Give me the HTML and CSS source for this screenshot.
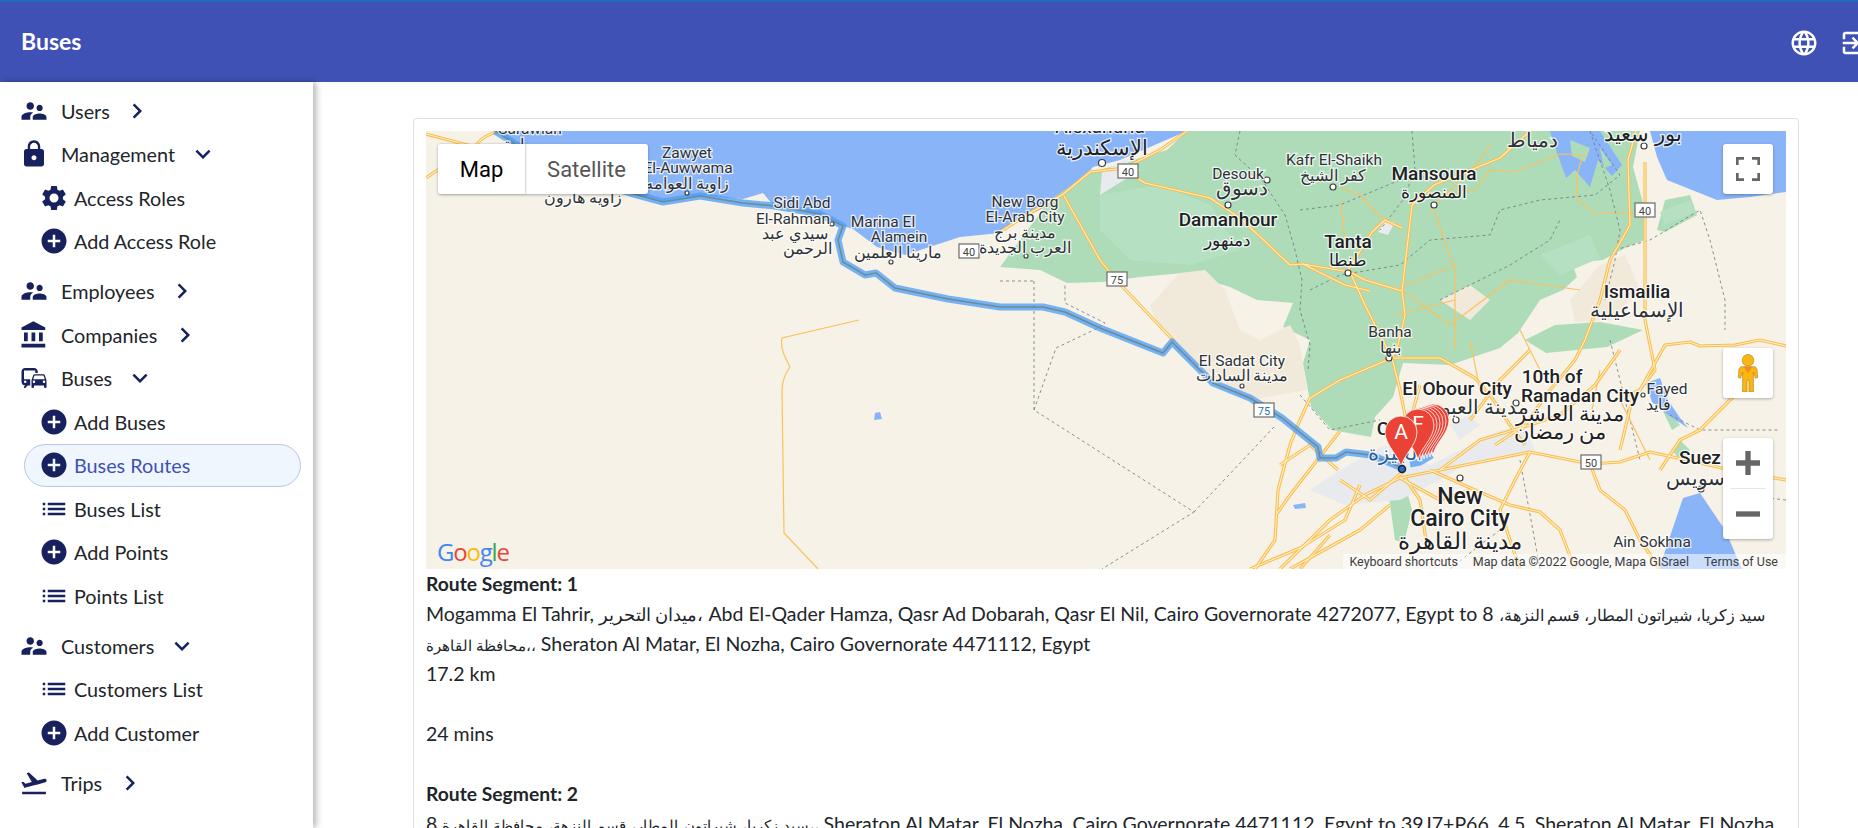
FILE: index.html
```html
<!DOCTYPE html>
<html lang="en">
<head>
  <meta charset="UTF-8">
  <title>Buses</title>
  <link rel="stylesheet" href="styles.css">
</head>
<body>
  <header class="topbar">
    <span class="topbar-title">Buses</span>
    <div class="topbar-actions">
      <svg class="icon" viewBox="0 0 24 24"><path d="M11.99 2C6.47 2 2 6.48 2 12s4.47 10 9.99 10C17.52 22 22 17.52 22 12S17.52 2 11.99 2zm6.93 6h-2.95c-.32-1.25-.78-2.45-1.38-3.56 1.84.63 3.37 1.91 4.33 3.56zM12 4.04c.83 1.2 1.48 2.53 1.91 3.96h-3.82c.43-1.43 1.08-2.76 1.91-3.96zM4.26 14C4.1 13.36 4 12.69 4 12s.1-1.36.26-2h3.38c-.08.66-.14 1.32-.14 2 0 .68.06 1.34.14 2H4.26zm.82 2h2.95c.32 1.25.78 2.45 1.38 3.56-1.84-.63-3.37-1.9-4.33-3.56zm2.95-8H5.08c.96-1.66 2.49-2.93 4.33-3.56C8.81 5.55 8.35 6.75 8.03 8zM12 19.96c-.83-1.2-1.48-2.53-1.91-3.96h3.82c-.43 1.43-1.08 2.76-1.91 3.96zM14.34 14H9.66c-.09-.66-.16-1.32-.16-2 0-.68.07-1.35.16-2h4.68c.09.65.16 1.32.16 2 0 .68-.07 1.34-.16 2zm.25 5.56c.6-1.11 1.06-2.31 1.38-3.56h2.95c-.96 1.65-2.49 2.93-4.33 3.56zM16.36 14c.08-.66.14-1.32.14-2 0-.68-.06-1.34-.14-2h3.38c.16.64.26 1.31.26 2s-.1 1.36-.26 2h-3.38z"/></svg>
      <svg class="icon" viewBox="0 0 24 24"><path d="M10.09 15.59L11.5 17l5-5-5-5-1.41 1.41L12.67 11H3v2h9.67l-2.58 2.59zM19 3H5c-1.11 0-2 .9-2 2v4h2V5h14v14H5v-4H3v4c0 1.1.89 2 2 2h14c1.1 0 2-.9 2-2V5c0-1.1-.9-2-2-2z"/></svg>
    </div>
  </header>

  <svg class="icon-defs" aria-hidden="true">
    <defs>
      <path id="i-people" d="M16.5 12c1.38 0 2.49-1.12 2.49-2.5S17.88 7 16.5 7C15.12 7 14 8.12 14 9.5s1.12 2.5 2.5 2.5zM9 11c1.66 0 2.99-1.34 2.99-3S10.66 5 9 5C7.34 5 6 6.34 6 8s1.34 3 3 3zm7.5 3c-1.83 0-5.5.92-5.5 2.75V19h11v-2.25c0-1.83-3.67-2.75-5.5-2.75zM9 13c-2.33 0-7 1.17-7 3.5V19h7v-2.25c0-.85.33-2.34 2.37-3.47C10.5 13.1 9.66 13 9 13z"/>
      <path id="i-lock" d="M18 8h-1V6c0-2.76-2.24-5-5-5S7 3.24 7 6v2H6c-1.1 0-2 .9-2 2v10c0 1.1.9 2 2 2h12c1.1 0 2-.9 2-2V10c0-1.1-.9-2-2-2zm-6 9c-1.1 0-2-.9-2-2s.9-2 2-2 2 .9 2 2-.9 2-2 2zm3.1-9H8.9V6c0-1.71 1.39-3.1 3.1-3.1 1.71 0 3.1 1.39 3.1 3.1v2z"/>
      <path id="i-gear" d="M19.14 12.94c.04-.3.06-.61.06-.94 0-.32-.02-.64-.07-.94l2.03-1.58c.18-.14.23-.41.12-.61l-1.92-3.32c-.12-.22-.37-.29-.59-.22l-2.39.96c-.5-.38-1.03-.7-1.62-.94l-.36-2.54c-.04-.24-.24-.41-.48-.41h-3.84c-.24 0-.43.17-.47.41l-.36 2.54c-.59.24-1.13.57-1.62.94l-2.39-.96c-.22-.08-.47 0-.59.22L2.74 8.87c-.12.21-.08.47.12.61l2.03 1.58c-.05.3-.09.63-.09.94s.02.64.07.94l-2.03 1.58c-.18.14-.23.41-.12.61l1.92 3.32c.12.22.37.29.59.22l2.39-.96c.5.38 1.03.7 1.62.94l.36 2.54c.05.24.24.41.48.41h3.84c.24 0 .44-.17.47-.41l.36-2.54c.59-.24 1.13-.56 1.62-.94l2.39.96c.22.08.47 0 .59-.22l1.92-3.32c.12-.22.07-.47-.12-.61l-2.01-1.58zM12 15.6c-1.98 0-3.6-1.62-3.6-3.6s1.62-3.6 3.6-3.6 3.6 1.62 3.6 3.6-1.62 3.6-3.6 3.6z"/>
      <path id="i-add" d="M12 2C6.48 2 2 6.48 2 12s4.48 10 10 10 10-4.48 10-10S17.52 2 12 2zm5 11h-4v4h-2v-4H7v-2h4V7h2v4h4v2z"/>
      <path id="i-bank" d="M4 10v7h3v-7H4zm6 0v7h3v-7h-3zM2 22h19v-3H2v3zm14-12v7h3v-7h-3zm-4.5-9L2 6v2h19V6l-9.5-5z"/>
      <path id="i-commute" d="M12 4H5C3.34 4 2 5.34 2 7v8c0 1.66 1.34 3 3 3l-1 1v1h1l2-2h2v-5H4V6h9v2h2V7c0-1.66-1.34-3-3-3zM5 14c.55 0 1 .45 1 1s-.45 1-1 1-1-.45-1-1 .45-1 1-1zm15.57-4.34c-.14-.4-.52-.66-.97-.66h-7.19c-.46 0-.83.26-.98.66L10 13.77l.01 5.51c0 .38.31.72.69.72h.62c.38 0 .68-.38.68-.76V18h8v1.24c0 .38.31.76.69.76h.61c.38 0 .69-.34.69-.72l.01-1.37v-4.14l-1.43-4.11zm-8.16.34h7.19l1.03 3h-9.25l1.03-3zM12 16c-.55 0-1-.45-1-1s.45-1 1-1 1 .45 1 1-.45 1-1 1zm8 0c-.55 0-1-.45-1-1s.45-1 1-1 1 .45 1 1-.45 1-1 1z"/>
      <path id="i-list" d="M3 13h2v-2H3v2zm0 4h2v-2H3v2zm0-8h2V7H3v2zm4 4h14v-2H7v2zm0 4h14v-2H7v2zM7 7v2h14V7H7z"/>
      <path id="i-flight" d="M2.5 19h19v2h-19zm19.57-9.36c-.21-.8-1.04-1.28-1.84-1.06L14.92 10l-6.9-6.43-1.93.51 4.14 7.17-4.97 1.33-1.97-1.54-1.45.39 1.82 3.16.77 1.33 1.6-.43 5.31-1.42 4.35-1.16L21 11.49c.81-.23 1.28-1.05 1.07-1.85z"/>
      <path id="i-right" d="M10 6L8.59 7.41 13.17 12l-4.58 4.59L10 18l6-6z"/>
      <path id="i-down" d="M16.59 8.59L12 13.17 7.41 8.59 6 10l6 6 6-6z"/>
    </defs>
  </svg>

  <div class="layout">
    <aside class="sidebar">
      <div class="nav-group">
        <a class="nav-item"><svg class="icon" viewBox="0 0 24 24"><use href="#i-people"/></svg><span>Users</span><svg class="icon chevron" viewBox="0 0 24 24"><use href="#i-right"/></svg></a>
      </div>
      <div class="nav-group open">
        <a class="nav-item"><svg class="icon" viewBox="0 0 24 24"><use href="#i-lock"/></svg><span>Management</span><svg class="icon chevron" viewBox="0 0 24 24"><use href="#i-down"/></svg></a>
        <a class="nav-sub"><svg class="icon" viewBox="0 0 24 24"><use href="#i-gear"/></svg><span>Access Roles</span></a>
        <a class="nav-sub"><svg class="icon" viewBox="0 0 24 24"><use href="#i-add"/></svg><span>Add Access Role</span></a>
      </div>
      <div class="nav-group">
        <a class="nav-item"><svg class="icon" viewBox="0 0 24 24"><use href="#i-people"/></svg><span>Employees</span><svg class="icon chevron" viewBox="0 0 24 24"><use href="#i-right"/></svg></a>
      </div>
      <div class="nav-group">
        <a class="nav-item"><svg class="icon" viewBox="0 0 24 24"><use href="#i-bank"/></svg><span>Companies</span><svg class="icon chevron" viewBox="0 0 24 24"><use href="#i-right"/></svg></a>
      </div>
      <div class="nav-group open">
        <a class="nav-item"><svg class="icon" viewBox="0 0 24 24"><use href="#i-commute"/></svg><span>Buses</span><svg class="icon chevron" viewBox="0 0 24 24"><use href="#i-down"/></svg></a>
        <a class="nav-sub"><svg class="icon" viewBox="0 0 24 24"><use href="#i-add"/></svg><span>Add Buses</span></a>
        <a class="nav-sub active"><svg class="icon" viewBox="0 0 24 24"><use href="#i-add"/></svg><span>Buses Routes</span></a>
        <a class="nav-sub"><svg class="icon" viewBox="0 0 24 24"><use href="#i-list"/></svg><span>Buses List</span></a>
        <a class="nav-sub"><svg class="icon" viewBox="0 0 24 24"><use href="#i-add"/></svg><span>Add Points</span></a>
        <a class="nav-sub"><svg class="icon" viewBox="0 0 24 24"><use href="#i-list"/></svg><span>Points List</span></a>
      </div>
      <div class="nav-group open">
        <a class="nav-item"><svg class="icon" viewBox="0 0 24 24"><use href="#i-people"/></svg><span>Customers</span><svg class="icon chevron" viewBox="0 0 24 24"><use href="#i-down"/></svg></a>
        <a class="nav-sub"><svg class="icon" viewBox="0 0 24 24"><use href="#i-list"/></svg><span>Customers List</span></a>
        <a class="nav-sub"><svg class="icon" viewBox="0 0 24 24"><use href="#i-add"/></svg><span>Add Customer</span></a>
      </div>
      <div class="nav-group">
        <a class="nav-item"><svg class="icon" viewBox="0 0 24 24"><use href="#i-flight"/></svg><span>Trips</span><svg class="icon chevron" viewBox="0 0 24 24"><use href="#i-right"/></svg></a>
      </div>
    </aside>

    <main class="content">
      <section class="card">
        <div class="map">
          <!-- viewBox uses page coordinates so the places are easy to check against the screenshot -->
          <svg class="map-canvas" viewBox="426 131 1360 438">
            <defs>
              <g id="roads">
                <path d="M426 134L475 147M475 147C480 138 490 134 498 131M426 178L445 165"/>
                <path d="M1187 131L1160 150L1125 168L1090 172L1062 195L1030 213L1000 232"/>
                <path d="M1128 172L1145 183L1210 198L1240 218L1290 265L1303 264L1350 272L1365 280L1402 291L1405 315L1398 345L1392 358L1340 380L1310 398L1300 420L1290 445L1278 490L1275 540L1255 569"/>
                <path d="M1064 196L1100 260L1118 282L1175 342"/>
                <path d="M1303 264L1345 285L1370 291"/>
                <path d="M1350 272L1365 305L1380 335L1392 358"/>
                <path d="M1402 291L1412 205L1434 185L1500 158L1530 131"/>
                <path d="M1402 228L1385 220L1372 232L1347 272"/>
                <path d="M1392 358L1440 358L1475 378L1490 395L1510 425L1525 445"/>
                <path d="M1392 358L1400 390L1410 440L1400 470"/>
                <path d="M1420 385L1405 440M1340 431L1290 495L1276 515"/>
                <path d="M1636 131L1628 160L1630 225L1610 260L1600 300L1585 340L1575 360L1550 390L1525 425L1495 445"/>
                <path d="M1645 162L1645 320L1650 345L1655 370L1632 400L1620 450"/>
                <path d="M1786 346L1760 340L1735 345L1700 346L1690 342L1665 345L1640 390L1625 396"/>
                <path d="M1280 569L1330 520L1365 495L1400 478L1440 470L1530 452L1590 464L1620 462L1650 452L1700 463L1730 470L1786 480"/>
                <path d="M1430 470L1475 490L1510 505L1540 512L1560 530L1575 569"/>
                <path d="M1530 452L1515 480L1500 510L1510 540L1520 569"/>
                <path d="M1590 464L1600 490L1625 510L1640 540L1660 569"/>
                <path d="M1440 470L1480 440L1530 425L1560 415L1595 385L1620 350"/>
                <path d="M1290 569L1360 530L1390 505M1426 540L1420 500L1405 478"/>
                <path d="M1300 569L1330 535"/>
                <path d="M1338 470L1310 445L1280 465M1340 480L1370 500L1405 470M1400 478L1440 500L1470 490"/>
                <path d="M1250 569L1300 548L1345 520L1360 485M1660 470L1680 440L1700 430L1735 395M1470 420L1500 380L1530 350"/>
              </g>
              <g id="thin-roads">
                <path d="M859 320L782 338C780 350 786 358 790 367C784 375 782 385 782 391L784 533L818 569"/>
                <path d="M1340 200L1345 240M1340 188L1360 195L1378 215L1400 228M1434 210L1455 270L1455 350"/>
                <path d="M1455 265L1395 290M1455 300L1395 315"/>
                <path d="M1588 155L1560 154L1520 170L1510 172L1490 170L1475 190L1432 195M1582 158L1577 175L1577 200L1595 213L1650 213"/>
                <path d="M1430 210L1476 165L1490 145M1402 290L1450 325L1510 280L1580 290"/>
                <path d="M1520 330L1540 370M1470 340L1480 390M1600 370L1590 420M1620 400L1650 460"/>
              </g>
              <g id="borders">
                <path d="M1034 281L1034 410L1194 512L1102 569M1034 410L1056 348L1098 328L1105 323L1065 303L1065 283M1000 281L1034 281M1194 512L1274 427"/>
                <path d="M1240 131L1235 155L1262 180L1285 215L1295 250L1302 280L1300 310L1310 345L1308 370"/>
                <path d="M1412 131L1415 170L1403 200L1380 230M1300 210L1340 205L1400 180L1440 175"/>
                <path d="M1310 290L1340 275L1400 265L1430 240L1490 235L1500 210L1540 200L1595 195L1620 175L1590 131"/>
                <path d="M1590 131L1610 190L1620 230L1615 260L1605 300"/>
                <path d="M1440 300L1510 265L1550 240L1560 220M1615 250L1650 240L1700 210L1710 240L1725 300L1725 330"/>
                <path d="M1300 395L1330 430L1380 420M1610 340L1640 460"/>
                <path d="M1670 415L1700 430L1780 430M1520 460L1540 569"/>
                <path d="M1500 530L1480 545L1450 569M1786 500L1740 495"/>
              </g>
              <g id="route-line">
                <path d="M495 131L514 143L560 170L630 193L663 202L700 196L743 203L775 206L820 214L843 226L838 240L843 262L865 275L876 273L895 288L948 299L1000 307L1043 307L1065 312L1100 328L1163 353L1172 342L1193 363L1213 383L1250 398L1282 418L1318 447L1320 458L1336 458L1346 452L1371 455L1400 467"/>
              </g>
              <path id="pin" d="M0 0C-1 -12 -16 -22 -16 -36A16 16 0 0 1 16 -36C16 -22 1 -12 0 0Z"/>
            </defs>

            <rect class="land" x="426" y="131" width="1360" height="438"/>
            <path class="water" d="M495 131L520 150L600 185L630 193L663 202L700 196L743 199L763 193L773 205L830 218L843 226L853 229L877 247L905 255L960 237L1000 233L1033 213L1067 197L1093 167L1120 160L1187 131Z"/>
            <path class="water" d="M1650 131L1657 157L1667 180L1687 188L1717 200L1750 197L1786 192L1786 131Z"/>

            <path class="green" d="M1000 267L1040 270L1067 283L1103 282L1140 277L1183 273L1230 287L1257 300L1293 303L1283 327L1310 340L1303 363L1311 407L1332 430L1371 437L1375 417L1393 397L1403 363L1450 365L1500 348L1518 333L1540 300L1563 290L1577 277L1572 263L1603 260L1627 247L1645 240L1643 203L1633 167L1640 131L1187 131L1167 150L1090 173L1050 200Z"/>
            <path class="green" d="M1525 340L1546 353L1607 347L1643 330L1600 322L1555 325Z"/>
            <path class="green" d="M1389 497L1395 470L1404 480L1412 510L1404 543L1395 540ZM1657 230L1665 200L1690 195L1697 215L1665 232ZM1660 405L1672 430L1680 425L1668 408ZM1672 450L1680 440L1690 450L1680 460Z"/>
            <path class="green-light" d="M1100 195L1160 185L1210 205L1240 250L1190 265L1130 260L1100 230ZM1540 255L1590 235L1600 258L1560 275ZM1660 212L1690 200L1695 212L1665 225Z"/>
            <path class="sand-patch" d="M1180 273L1205 270L1225 290L1240 330L1260 340L1290 325L1300 345L1307 390L1250 400L1200 370L1160 330L1150 305Z"/>
            <path class="sand-patch" d="M1570 300L1600 265L1625 255L1640 290L1610 320L1575 322ZM1440 300L1470 285L1490 300L1470 320Z"/>
            <path class="urban" d="M1310 490L1340 470L1385 445L1430 465L1500 430L1525 428L1535 450L1470 462L1440 480L1400 500L1345 505Z"/>
            <path class="urban" d="M1450 425L1468 415L1480 425L1460 440ZM1102 172L1125 160L1140 170L1100 195ZM1385 220L1395 222L1388 235L1378 232Z"/>

            <path class="water" d="M1550 131L1600 131L1622 165L1612 176L1598 160L1590 187L1575 170L1566 178L1556 150Z"/>
            <path class="green" d="M1570 140L1590 148L1585 162L1572 156ZM1600 148L1612 165L1604 168Z"/>
            <path class="water" d="M1659 569L1683 498L1700 493L1725 530L1742 569Z"/>
            <path class="water" d="M1646 383L1660 378L1668 400L1680 418L1688 428L1668 415L1652 402Z"/>
            <path class="water" d="M875 413L880 412L882 419L874 420ZM1293 505L1305 503L1306 508L1295 509ZM950 131L965 131L960 135Z"/>

            <use href="#borders" class="border"/>
            <use href="#thin-roads" class="road-thin"/>
            <use href="#roads" class="road-casing"/>
            <use href="#roads" class="road-core"/>
            <use href="#route-line" class="route"/>
            <use href="#route-line" class="route-center"/>
            <path class="route" d="M1410 464L1420 462L1432 455"/>

            <g class="shield"><rect x="1118" y="164" width="20" height="14"/><text x="1128" y="176" class="shield-text">40</text></g>
            <g class="shield"><rect x="959" y="244" width="20" height="14"/><text x="969" y="256" class="shield-text">40</text></g>
            <g class="shield"><rect x="1107" y="272" width="20" height="14"/><text x="1117" y="284" class="shield-text">75</text></g>
            <g class="shield"><rect x="1635" y="203" width="20" height="14"/><text x="1645" y="215" class="shield-text">40</text></g>
            <g class="shield"><rect x="1254" y="403" width="20" height="14"/><text x="1264" y="415" class="shield-text route-text">75</text></g>
            <g class="shield"><rect x="1581" y="455" width="20" height="14"/><text x="1591" y="467" class="shield-text">50</text></g>

            <g class="towns">
              <circle cx="687" cy="193" r="2"/><circle cx="832" cy="224" r="2"/><circle cx="891" cy="262" r="2"/>
              <circle cx="1267" cy="180" r="3"/><circle cx="1228" cy="205" r="3"/><circle cx="1333" cy="187" r="3"/>
              <circle cx="1434" cy="205" r="3"/><circle cx="1389" cy="358" r="3"/><circle cx="1242" cy="386" r="2"/>
              <circle cx="1026" cy="256" r="2"/><circle cx="1456" cy="420" r="3"/><circle cx="1516" cy="403" r="3"/>
              <circle cx="1643" cy="395" r="2"/><circle cx="1701" cy="489" r="3"/><circle cx="1460" cy="478" r="3"/>
              <circle cx="1644" cy="146" r="3"/><circle cx="1348" cy="273" r="3"/><circle cx="1102" cy="163" r="3.5"/>
            </g>

            <g class="labels">
              <text x="530" y="134">Sarawlah</text>
              <text x="520" y="150" class="ar">براوة</text>
              <text x="687" y="158">Zawyet</text>
              <text x="688" y="173">El-Auwwama</text>
              <text x="687" y="189" class="ar">زاوية العوامه</text>
              <text x="583" y="203" class="ar">زاويه هارون</text>
              <text x="802" y="208">Sidi Abd</text>
              <text x="793" y="224">El-Rahman</text>
              <text x="795" y="239" class="ar">سيدي عبد</text>
              <text x="807" y="254" class="ar">الرحمن</text>
              <text x="883" y="227">Marina El</text>
              <text x="899" y="242">Alamein</text>
              <text x="898" y="258" class="ar">مارينا العلمين</text>
              <text x="1025" y="207">New Borg</text>
              <text x="1025" y="222">El-Arab City</text>
              <text x="1025" y="238" class="ar">مدينة برج</text>
              <text x="1025" y="253" class="ar">العرب الجديدة</text>
              <text x="1100" y="133" class="big">Alexandria</text>
              <text x="1102" y="155" class="ar ar-lg">الإسكندرية</text>
              <text x="1238" y="179">Desouk</text>
              <text x="1242" y="195" class="ar ar-md">دسوق</text>
              <text x="1334" y="165">Kafr El-Shaikh</text>
              <text x="1333" y="181" class="ar">كفر الشيخ</text>
              <text x="1434" y="180" class="big strong">Mansoura</text>
              <text x="1434" y="198" class="big ar">المنصورة</text>
              <text x="1228" y="226" class="big strong">Damanhour</text>
              <text x="1227" y="246" class="big ar">دمنهور</text>
              <text x="1348" y="248" class="big strong">Tanta</text>
              <text x="1348" y="266" class="big ar">طنطا</text>
              <text x="1390" y="337">Banha</text>
              <text x="1390" y="353" class="ar">بنها</text>
              <text x="1242" y="366">El Sadat City</text>
              <text x="1242" y="381" class="ar">مدينة السادات</text>
              <text x="1457" y="395" class="big strong">El Obour City</text>
              <text x="1480" y="414" class="ar ar-md">مدينة العبور</text>
              <text x="1552" y="383" class="big strong">10th of</text>
              <text x="1580" y="402" class="big strong">Ramadan City</text>
              <text x="1570" y="421" class="ar ar-lg">مدينة العاشر</text>
              <text x="1560" y="439" class="ar ar-lg">من رمضان</text>
              <text x="1667" y="394">Fayed</text>
              <text x="1658" y="410" class="ar">فايد</text>
              <text x="1700" y="464" class="big strong">Suez</text>
              <text x="1695" y="485" class="ar ar-md">سويس</text>
              <text x="1460" y="504" class="huge">New</text>
              <text x="1460" y="526" class="huge">Cairo City</text>
              <text x="1460" y="549" class="ar ar-xl">مدينة القاهرة</text>
              <text x="1652" y="547">Ain Sokhna</text>
              <text x="1637" y="298" class="big strong">Ismailia</text>
              <text x="1637" y="317" class="ar ar-md">الإسماعيلية</text>
              <text x="1643" y="141" class="ar ar-lg">بور سعيد</text>
              <text x="1532" y="147" class="ar ar-md">دمياط</text>
              <text x="1399" y="435" class="big strong">Cairo</text>
              <text x="1395" y="460" class="ar ar-lg cairo-ar">الجيزة</text>
            </g>

            <g class="pins">
              <use href="#pin" x="1433" y="456"/>
              <use href="#pin" x="1430" y="457"/>
              <use href="#pin" x="1427" y="458"/>
              <use href="#pin" x="1424" y="459"/>
              <use href="#pin" x="1421" y="460"/>
              <g><use href="#pin" x="1418" y="461"/><text x="1418" y="431" class="pin-text">F</text></g>
              <g><use href="#pin" x="1401" y="468"/><text x="1401" y="439" class="pin-text">A</text></g>
            </g>
            <circle class="pin-target" cx="1402" cy="469" r="3.5"/>
          </svg>

          <div class="map-type">
            <button class="map-type-btn selected">Map</button>
            <button class="map-type-btn">Satellite</button>
          </div>
          <button class="map-btn fullscreen">
            <svg viewBox="0 0 18 18" width="24" height="24"><path d="M0 0v6h2V2h4V0H0zm16 0h-4v2h4v4h2V0h-2zm0 16h-4v2h6v-6h-2v4zM2 12H0v6h6v-2H2v-4z"/></svg>
          </button>
          <button class="map-btn pegman">
            <svg viewBox="0 0 22 42" width="22" height="38">
              <circle cx="11" cy="7" r="6.5" fill="#fcb40f" stroke="#9c7a1f" stroke-width=".6"/>
              <path d="M4 14h14c1.5 0 2.5 1 3 3l.8 9-2.6.8L17 20v22h-5V29h-2v13H5V20L2.800 26.800.2 26l.8-9c.5-2 1.500-3 3-3z" fill="#fcb40f" stroke="#9c7a1f" stroke-width=".6"/>
              <path d="M6 14l5 7 5-7" fill="#f08a24"/>
            </svg>
          </button>
          <div class="zoom-ctrl">
            <button class="zoom-btn"><svg viewBox="0 0 18 18" width="24" height="24"><path d="M18 7h-7V0H7v7H0v4h7v7h4v-7h7z"/></svg></button>
            <div class="zoom-sep"></div>
            <button class="zoom-btn"><svg viewBox="0 0 18 18" width="24" height="24"><path d="M0 7h18v4H0z"/></svg></button>
          </div>
          <div class="google-logo"><span class="g-blue">G</span><span class="g-red">o</span><span class="g-yellow">o</span><span class="g-blue">g</span><span class="g-green">l</span><span class="g-red">e</span></div>
          <div class="attribution">
            <span>Keyboard shortcuts</span>
            <span>Map data ©2022 Google, Mapa GISrael</span>
            <span>Terms of Use</span>
          </div>
        </div>

        <div class="segment">
          <b>Route Segment: 1</b><br>
          Mogamma El Tahrir, <span class="ar-text wide">ميدان التحرير،</span> Abd El-Qader Hamza, Qasr Ad Dobarah, Qasr El Nil, Cairo Governorate 4272077, Egypt to 8 <bdi class="ar-text mid">سيد زكريا، شيراتون المطار، قسم النزهة،</bdi><br>
          <span class="ar-text">محافظة القاهرة،،</span> Sheraton Al Matar, El Nozha, Cairo Governorate 4471112, Egypt<br>
          17.2 km<br><br>
          24 mins<br><br>
          <b>Route Segment: 2</b><br>
          8 <span class="ar-text spaced">سيد زكريا، شيراتون المطار، قسم النزهة، محافظة القاهرة،،</span> Sheraton Al Matar, El Nozha, Cairo Governorate 4471112, Egypt to 39J7+P66, 4.5, Sheraton Al Matar, El Nozha
        </div>
      </section>
    </main>
  </div>
</body>
</html>
```

FILE: styles.css
```css
* {
  box-sizing: border-box;
}
html, body {
  height: 100%;
}
body {
  margin: 0;
  font-family: Lato, "Noto Sans", sans-serif;
  color: #212529;
  background-color: white;
  overflow: hidden;
}
.icon {
  width: 30px;
  height: 30px;
  flex: none;
  fill: currentColor;
}
.icon-defs {
  display: none;
}

.topbar {
  height: 82px;
  display: flex;
  align-items: center;
  justify-content: space-between;
  padding: 2px 0 0 21px;
  color: white;
  background-color: #3f51b5;
  border-top: 2px solid #1e6fb8;
}
.topbar-title {
  margin-bottom: 5px;
  font-size: 23px;
  font-weight: 700;
}
.topbar-actions {
  display: flex;
  gap: 20px;
  margin-right: -11px;
}

.layout {
  display: flex;
  height: calc(100% - 82px);
}
.sidebar {
  width: 313px;
  flex: none;
  padding-top: 7px;
  background-color: white;
  box-shadow: 3px 0 7px rgba(0, 0, 0, 0.3);
  font-size: 19.800px;
}
.nav-group.open {
  margin-bottom: 6.500px;
}
.nav-item, .nav-sub {
  display: flex;
  align-items: center;
  height: 43.500px;
  color: #212529;
}
.nav-item {
  padding-left: 18.500px;
  gap: 12.500px;
}
.nav-item .icon, .nav-sub .icon {
  color: #17215e;
}
.nav-sub {
  margin-left: 24px;
  width: 277px;
  padding-left: 13.500px;
  gap: 5.500px;
  border: 1px solid transparent;
  border-radius: 22px;
}
.nav-sub.active {
  color: #3f51b5;
  background-color: #eff6fe;
  border-color: #b9c4ea;
}

.content {
  flex: 1;
  padding: 36px 59px 0 100px;
}
.card {
  padding: 12px;
  border: 1px solid #e0e0e0;
  border-radius: 4px;
  background-color: white;
  font-size: 19.500px;
  line-height: 30px;
}

.map {
  position: relative;
  height: 438px;
  overflow: hidden;
}
.map-canvas {
  display: block;
  width: 100%;
  height: 100%;
}
.land { fill: #f6f2e8; }
.water { fill: #8ab4f8; }
.green { fill: #aedcb9; }
.green-light { fill: #b6e0c2; }
.sand-patch { fill: #f1eadb; }
.urban { fill: #e8eaed; }
.border {
  fill: none;
  stroke: #70757a;
  stroke-width: 1;
  stroke-dasharray: 3 3;
  stroke-opacity: 0.8;
}
.road-casing {
  fill: none;
  stroke: #f9bd4d;
  stroke-width: 3.200;
  stroke-linejoin: round;
}
.road-core {
  fill: none;
  stroke: #fdeec4;
  stroke-width: 1.100;
  stroke-linejoin: round;
}
.road-thin {
  fill: none;
  stroke: #f9c25c;
  stroke-width: 1.200;
}
.route {
  fill: none;
  stroke: #4a9cf5;
  stroke-opacity: 0.75;
  stroke-width: 7px;
  stroke-linejoin: round;
}
.route-center {
  fill: none;
  stroke: #6c8a99;
  stroke-width: 1.500;
}
.shield rect {
  fill: white;
  stroke: #6b6b6b;
  stroke-width: 1.200;
}
.shield-text {
  font-family: Roboto, sans-serif;
  font-size: 11px;
  text-anchor: middle;
  fill: #444;
}
.shield rect + .route-text {
  fill: #2a6fb0;
}
.towns circle {
  fill: white;
  stroke: #3c4043;
  stroke-width: 1.200;
}
.labels text {
  font-family: Roboto, sans-serif;
  font-size: 15.500px;
  text-anchor: middle;
  fill: #2e3236;
  stroke: white;
  stroke-width: 2.500px;
  stroke-opacity: 0.8;
  paint-order: stroke;
}
.labels .ar {
  font-size: 15.500px;
}
.labels .big {
  font-size: 19px;
  fill: #202124;
}
.labels .big.ar {
  font-size: 17px;
}
.labels .ar.ar-md {
  font-size: 20px;
}
.labels .ar.ar-lg {
  font-size: 21px;
  fill: #202124;
}
.labels .ar.ar-xl {
  font-size: 23px;
  fill: #202124;
}
.labels .huge {
  font-size: 23px;
  font-weight: 500;
  fill: #202124;
}
.labels .strong {
  font-weight: 500;
}
.labels .ar.cairo-ar {
  fill: #2a5e9e;
}
.pins use {
  fill: #ea4335;
  stroke: white;
  stroke-width: 0.800;
}
.pin-text {
  font-family: Roboto, sans-serif;
  font-size: 21px;
  text-anchor: middle;
  fill: white;
}
.pin-target {
  fill: #1d6ed8;
  stroke: #202124;
  stroke-width: 1.500;
}

.map-type {
  position: absolute;
  top: 13px;
  left: 12px;
  display: flex;
  border-radius: 3px;
  box-shadow: 0 1px 3px rgba(0, 0, 0, 0.3);
}
.map-type-btn {
  height: 50px;
  padding: 0 16px;
  border: none;
  background-color: white;
  font-family: Roboto, sans-serif;
  font-size: 22px;
  color: #565656;
}
.map-type-btn:first-child {
  position: relative;
  width: 87px;
  border-radius: 3px 0 0 3px;
  box-shadow: 1px 0 2px rgba(0, 0, 0, 0.2);
}
.map-type-btn:last-child {
  width: 123px;
  border-radius: 0 3px 3px 0;
}
.map-type-btn.selected {
  color: black;
}
.map-btn {
  position: absolute;
  right: 13px;
  width: 50px;
  height: 50px;
  display: flex;
  align-items: center;
  justify-content: center;
  padding: 0;
  border: none;
  border-radius: 3px;
  background-color: white;
  box-shadow: 0 1px 3px rgba(0, 0, 0, 0.3);
  fill: #666;
}
.fullscreen {
  top: 13px;
}
.pegman {
  top: 217px;
}
.zoom-ctrl {
  position: absolute;
  right: 13px;
  top: 307px;
  width: 50px;
  height: 101px;
  display: flex;
  flex-direction: column;
  align-items: center;
  border-radius: 3px;
  background-color: white;
  box-shadow: 0 1px 3px rgba(0, 0, 0, 0.3);
}
.zoom-btn {
  width: 50px;
  height: 50px;
  display: flex;
  align-items: center;
  justify-content: center;
  padding: 0;
  border: none;
  background: none;
  fill: #666;
}
.zoom-sep {
  width: 36px;
  height: 1px;
  background-color: #e6e6e6;
}
.google-logo {
  position: absolute;
  left: 11px;
  bottom: 3px;
  font-family: "Open Sans", sans-serif;
  font-size: 24px;
  line-height: 28px;
  font-weight: 500;
  letter-spacing: -1.200px;
}
.g-blue { color: #4285f4; }
.g-red { color: #ea4335; }
.g-yellow { color: #fbbc05; }
.g-green { color: #34a853; }
.attribution {
  position: absolute;
  right: 0;
  bottom: 0;
  height: 15px;
  display: flex;
  gap: 15px;
  padding: 0 8px 0 6px;
  background-color: rgba(255, 255, 255, 0.55);
  font-family: Roboto, sans-serif;
  font-size: 12.500px;
  line-height: 15px;
  color: #3c4043;
}

.segment {
  margin-bottom: 20px;
}
.segment b {
  font-size: 19.300px;
  font-weight: 700;
}
.ar-text {
  font-size: 15px;
  line-height: 0;
}
.ar-text.wide {
  font-size: 17.500px;
}
.ar-text.mid {
  font-size: 15.500px;
}
.ar-text.spaced {
  word-spacing: 1.200px;
}
```
